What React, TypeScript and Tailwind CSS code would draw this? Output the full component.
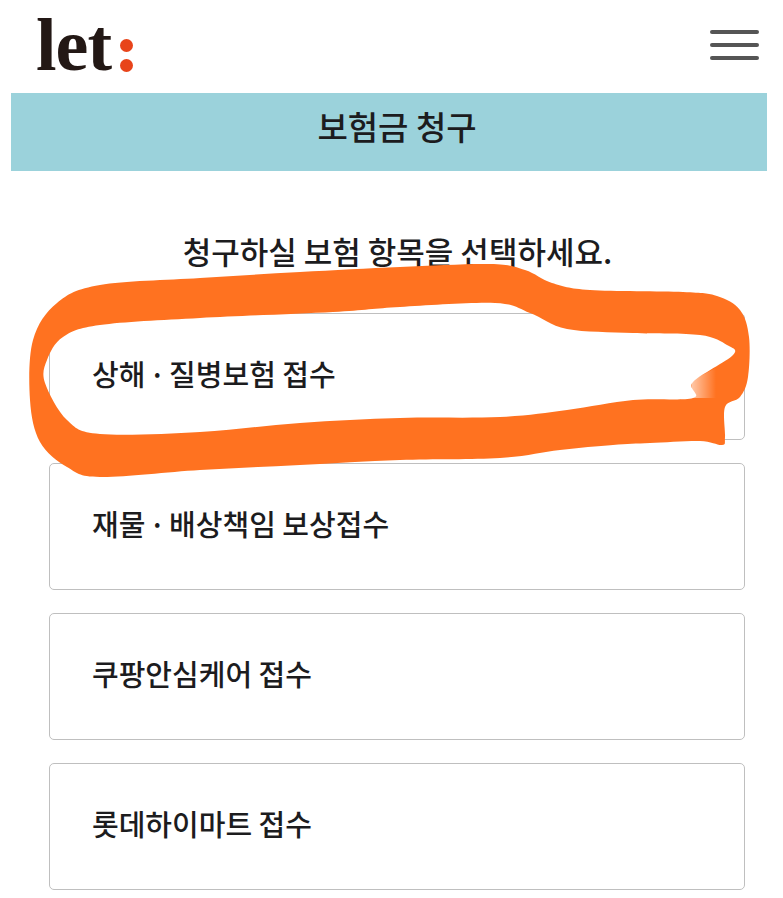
const ITEMS = [
  ['상해', '질병보험 접수'],
  ['재물', '배상책임 보상접수'],
  ['쿠팡안심케어 접수'],
  ['롯데하이마트 접수'],
];

// hand-drawn marker outline, traced from the screenshot
const OUTER: [number, number][] = [
  [722, 445], [700, 441], [650, 443], [613, 445], [560, 450], [500, 458], [400, 460], [300, 465], [200, 470], [100, 477],
  [67, 467], [40, 442], [30, 400], [33, 340], [57, 303], [100, 285], [200, 278], [300, 272], [400, 267], [490, 264],
  [525, 270], [552, 283], [590, 290], [683, 292], [717, 296], [740, 310], [749, 337], [748, 377], [740, 397], [725, 407],
  [725, 437],
];
const INNER: [number, number][] = [
  [733, 355], [693, 382], [693, 398], [633, 400], [567, 410], [500, 417], [400, 418], [300, 423], [200, 432], [100, 434],
  [67, 420], [45, 383], [47, 360], [63, 337], [100, 325], [200, 318], [333, 312], [400, 307], [495, 303], [530, 313],
  [567, 329], [633, 333], [700, 335], [727, 345],
];

function smooth(pts: [number, number][]) {
  let d = `M${pts[0][0]} ${pts[0][1]}`;
  const n = pts.length;
  for (let i = 0; i < n; i++) {
    const p0 = pts[(i - 1 + n) % n];
    const p1 = pts[i];
    const p2 = pts[(i + 1) % n];
    const p3 = pts[(i + 2) % n];
    const c1x = p1[0] + (p2[0] - p0[0]) / 6;
    const c1y = p1[1] + (p2[1] - p0[1]) / 6;
    const c2x = p2[0] - (p3[0] - p1[0]) / 6;
    const c2y = p2[1] - (p3[1] - p1[1]) / 6;
    d += ` C${c1x} ${c1y} ${c2x} ${c2y} ${p2[0]} ${p2[1]}`;
  }
  return d + ' Z';
}

function Logo() {
  return (
    <div className="flex items-end">
      <span className="font-['Liberation_Serif',serif] text-[74px] leading-[56px] font-bold tracking-[-1px] text-[#231815]">let</span>
      <span className="mb-[1px] ml-[9px] flex flex-col gap-[7px]">
        <span className="h-[13px] w-[13px] rounded-full bg-[#e8441a]" />
        <span className="h-[13px] w-[13px] rounded-full bg-[#e8441a]" />
      </span>
    </div>
  );
}

export default function App() {
  return (
    <div className="relative h-[898px] w-[783px] overflow-hidden bg-white font-['Noto_Sans_CJK_KR',sans-serif] text-[#1c1c1e]">
      <header className="flex h-[93px] items-start justify-between pt-[17px] pr-[24px] pl-[36px]">
        <Logo />
        <div className="mt-[13px] flex w-[49px] flex-col gap-[9px]">
          <span className="h-[4px] rounded-full bg-[#555555]" />
          <span className="h-[4px] rounded-full bg-[#555555]" />
          <span className="h-[4px] rounded-full bg-[#555555]" />
        </div>
      </header>

      <div className="mx-[11px] flex h-[78px] w-[756px] items-center justify-center bg-[#9bd2db] pb-[10px] pl-[16px] text-[33px] font-medium">
        보험금 청구
      </div>

      <p className="mt-[57px] pl-[12px] text-center text-[31px] leading-[46px] font-medium">청구하실 보험 항목을 선택하세요.</p>

      <ul className="mt-[39px] ml-[49px] flex w-[696px] flex-col gap-[23px]">
        {ITEMS.map((parts) => (
          <li
            key={parts[0]}
            className="flex h-[127px] items-center rounded-[5px] border border-[#bfbfbf] bg-white pb-[5px] pl-[42px] text-[29px] font-medium"
          >
            <span>
              {parts[0]}
              {parts[1] && (
                <>
                  {' '}
                  <span className="mx-[-3px]">·</span> {parts[1]}
                </>
              )}
            </span>
          </li>
        ))}
      </ul>

      <svg className="absolute top-0 left-0 blur-[0.6px]" width="783" height="898" viewBox="0 0 783 898">
        <defs>
          <linearGradient id="tail" x1="0" y1="0" x2="1" y2="0">
            <stop offset="0" stopColor="#ffffff" stopOpacity="0.6" />
            <stop offset="1" stopColor="#ffffff" stopOpacity="0" />
          </linearGradient>
        </defs>
        <path d={`${smooth(OUTER)} ${smooth(INNER)}`} fill="#ff7220" fillRule="evenodd" />
        <path d="M692 380 L716 368 L716 398 L692 398 Z" fill="url(#tail)" />
      </svg>
    </div>
  );
}
